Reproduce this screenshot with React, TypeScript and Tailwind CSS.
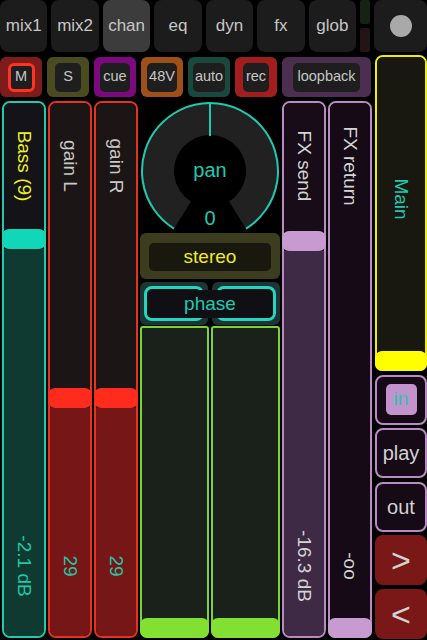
import React from "react";

type FaderProps = {
  borderCls: string;
  topCls: string;
  thumbCls: string;
  fillCls?: string;
  topHCls?: string;
  bottomThumb?: boolean;
  label: string;
  labelCls: string;
  value?: string;
  valueCls?: string;
  labelTopCls: string;
  widthCls: string;
};

function Fader(p: FaderProps) {
  return (
    <div className={`relative h-full ${p.widthCls} border-2 ${p.borderCls} rounded-[8px] flex flex-col`}>
      {p.bottomThumb ? (
        <>
          <div className={`flex-1 ${p.topCls} rounded-t-[6px]`} />
          <div className={`h-[20px] ${p.thumbCls} rounded-[7px] -mx-[2px] -mb-[2px]`} />
        </>
      ) : (
        <>
          <div className={`${p.topHCls} ${p.topCls} rounded-t-[6px]`} />
          <div className={`h-[20px] ${p.thumbCls} rounded-[7px] -mx-[2px]`} />
          <div className={`flex-1 ${p.fillCls} rounded-b-[6px]`} />
        </>
      )}
      <span
        className={`absolute left-1/2 ${p.labelTopCls} -translate-x-1/2 -translate-y-1/2 [writing-mode:vertical-rl] whitespace-nowrap text-[19px] leading-none ${p.labelCls}`}
      >
        {p.label}
      </span>
      {p.value !== undefined && (
        <span
          className={`absolute left-1/2 top-[463px] -translate-x-1/2 -translate-y-1/2 [writing-mode:vertical-rl] whitespace-nowrap text-[19px] leading-none ${p.valueCls}`}
        >
          {p.value}
        </span>
      )}
    </div>
  );
}

function Knob() {
  return (
    <div className="relative h-[132px]">
      <svg width="140" height="132" viewBox="0 0 140 132" className="block">
        <path
          d="M 33.97 127.67 A 68 68 0 1 1 106.03 127.67 L 89.08 100.53 A 36 36 0 1 0 50.92 100.53 Z"
          fill="#212121"
        />
        <path
          d="M 33.97 127.67 A 68 68 0 1 1 106.03 127.67"
          fill="none"
          stroke="#1fc9b1"
          strokeWidth="2"
        />
        <line x1="70" y1="2" x2="70" y2="35" stroke="#1fc9b1" strokeWidth="2" />
      </svg>
      <span className="absolute left-1/2 top-[69px] -translate-x-1/2 -translate-y-1/2 text-[20px] leading-none text-[#1fc9b1]">
        pan
      </span>
      <span className="absolute left-1/2 top-[117px] -translate-x-1/2 -translate-y-1/2 text-[20px] leading-none text-[#1fc9b1]">
        0
      </span>
    </div>
  );
}

const tabs = ["mix1", "mix2", "chan", "eq", "dyn", "fx", "glob"];

export default function App() {
  return (
    <div className="w-[427px] h-[640px] bg-black flex flex-col overflow-hidden font-['Liberation_Sans',Arial,sans-serif] text-[#c6c6c6]">
      {/* tab row */}
      <div className="h-[52px] flex">
        <div className="w-[356px] grid grid-cols-7 gap-[4px]">
          {tabs.map((t) => (
            <div
              key={t}
              className={`rounded-[8px] flex items-center justify-center text-[17px] ${
                t === "chan" ? "bg-[#3c3c3c]" : "bg-[#1c1c1c]"
              }`}
            >
              {t}
            </div>
          ))}
        </div>
        <div className="ml-[4px] w-[10px] flex flex-col gap-[4px]">
          <div className="flex-1 bg-[#152315] rounded-[2px]" />
          <div className="flex-1 bg-[#231515] rounded-[2px]" />
        </div>
        <div className="ml-[4px] flex-1 bg-[#1c1c1c] rounded-[8px] flex items-center justify-center">
          <div className="w-[22px] h-[22px] rounded-full bg-[#a9a9a9]" />
        </div>
      </div>

      <div className="flex-1 flex mt-[3px]">
        {/* left area */}
        <div className="w-[372px] flex flex-col pt-[2px]">
          <div className="h-[40px] grid grid-cols-8 gap-[5px] pr-[1px] text-[14.5px]">
            <div className="rounded-[6px] bg-[#7e1c1c] flex items-center justify-center">
              <div className="h-[29px] min-w-[27px] px-[3px] rounded-[6px] border-[3px] border-[#ff3322] bg-[#1e1e1e] flex items-center justify-center">
                M
              </div>
            </div>
            <div className="rounded-[6px] bg-[#4b4b21] flex items-center justify-center">
              <div className="h-[29px] min-w-[26px] px-[3px] rounded-[5px] bg-[#1e1e1e] flex items-center justify-center">
                S
              </div>
            </div>
            <div className="rounded-[6px] bg-[#7c0a7e] flex items-center justify-center">
              <div className="h-[29px] min-w-[26px] px-[3px] rounded-[5px] bg-[#1e1e1e] flex items-center justify-center">
                cue
              </div>
            </div>
            <div className="rounded-[6px] bg-[#9e5018] flex items-center justify-center">
              <div className="h-[29px] min-w-[26px] px-[2px] rounded-[5px] bg-[#1e1e1e] flex items-center justify-center">
                48V
              </div>
            </div>
            <div className="rounded-[6px] bg-[#19483f] flex items-center justify-center">
              <div className="h-[29px] min-w-[26px] px-[2px] rounded-[5px] bg-[#1e1e1e] flex items-center justify-center">
                auto
              </div>
            </div>
            <div className="rounded-[6px] bg-[#a21e1e] flex items-center justify-center">
              <div className="h-[29px] min-w-[26px] px-[3px] rounded-[5px] bg-[#1e1e1e] flex items-center justify-center">
                rec
              </div>
            </div>
            <div className="col-span-2 rounded-[6px] bg-[#4c2e50] flex items-center justify-center">
              <div className="h-[29px] min-w-[26px] px-[4px] rounded-[5px] bg-[#1e1e1e] flex items-center justify-center">
                loopback
              </div>
            </div>
          </div>

          <div className="mt-[4px] h-[537px] flex gap-[2px] pl-[2px]">
            <Fader
              widthCls="w-[44px]"
              borderCls="border-[#1fcbb0]"
              topCls="bg-[#141418]"
              topHCls="h-[126px]"
              thumbCls="bg-[#12d6b8]"
              fillCls="bg-[#0f3a32]"
              label="Bass (9)"
              labelCls="text-[#f0f020]"
              labelTopCls="top-[63px]"
              value="-2.1 dB"
              valueCls="text-[#1fc9a8]"
            />
            <Fader
              widthCls="w-[44px]"
              borderCls="border-[#e6321f]"
              topCls="bg-[#1c1515]"
              topHCls="h-[285px]"
              thumbCls="bg-[#ff2b1c]"
              fillCls="bg-[#761616]"
              label="gain L"
              labelCls="text-[#c8c8c8]"
              labelTopCls="top-[63px]"
              value="29"
              valueCls="text-[#1fc9a8]"
            />
            <Fader
              widthCls="w-[44px]"
              borderCls="border-[#e6321f]"
              topCls="bg-[#1c1515]"
              topHCls="h-[285px]"
              thumbCls="bg-[#ff2b1c]"
              fillCls="bg-[#761616]"
              label="gain R"
              labelCls="text-[#c8c8c8]"
              labelTopCls="top-[63px]"
              value="29"
              valueCls="text-[#1fc9a8]"
            />

            {/* center column */}
            <div className="w-[140px] flex flex-col">
              <Knob />
              <div className="h-[46px] rounded-[6px] bg-[#3c3c1e] px-[9px] pt-[10px] pb-[8px]">
                <div className="h-full rounded-[5px] bg-[#18180e] flex items-center justify-center text-[19px] text-[#ecec22]">
                  stereo
                </div>
              </div>
              <div className="relative mt-[3px] h-[43px] grid grid-cols-2 gap-[4px]">
                <div className="rounded-[6px] bg-[#1a3533] p-[4px]">
                  <div className="h-full rounded-[8px] border-[3px] border-[#22d6c0] bg-[#101014]" />
                </div>
                <div className="rounded-[6px] bg-[#1a3533] p-[4px]">
                  <div className="h-full rounded-[8px] border-[3px] border-[#22d6c0] bg-[#101014]" />
                </div>
                <div className="absolute left-[7px] right-[7px] top-[8px] bottom-[7px] rounded-[5px] bg-[#101014] flex items-center justify-center text-[19px] text-[#1fc9b1]">
                  phase
                </div>
              </div>
              <div className="mt-[1px] flex-1 grid grid-cols-2 gap-[2px]">
                {[0, 1].map((i) => (
                  <div
                    key={i}
                    className="border-2 border-[#78d630] bg-[#1a201a] rounded-t-[3px] rounded-b-[8px] flex flex-col justify-end"
                  >
                    <div className="h-[20px] bg-[#82e032] rounded-[7px] -mx-[2px] -mb-[2px]" />
                  </div>
                ))}
              </div>
            </div>

            <Fader
              widthCls="w-[44px]"
              borderCls="border-[#b98bc2]"
              topCls="bg-[#190c19]"
              topHCls="h-[128px]"
              thumbCls="bg-[#c79ad0]"
              fillCls="bg-[#3f2a46]"
              label="FX send"
              labelCls="text-[#d4d4d4]"
              labelTopCls="top-[63px]"
              value="-16.3 dB"
              valueCls="text-[#d4d4d4]"
            />
            <Fader
              widthCls="w-[44px]"
              borderCls="border-[#b98bc2]"
              topCls="bg-[#150a15]"
              thumbCls="bg-[#c79ad0]"
              bottomThumb
              label="FX return"
              labelCls="text-[#d4d4d4]"
              labelTopCls="top-[63px]"
              value="-oo"
              valueCls="text-[#d4d4d4]"
            />
          </div>
        </div>

        {/* right column */}
        <div className="ml-[3px] w-[52px] flex flex-col gap-[3.5px]">
          <div className="h-[316px] shrink-0">
            <Fader
              widthCls="w-full"
              borderCls="border-[#eeee00]"
              topCls="bg-[#181810]"
              thumbCls="bg-[#ffff00]"
              bottomThumb
              label="Main"
              labelCls="text-[#1fc9b1]"
              labelTopCls="top-[142px]"
            />
          </div>
          <div className="h-[50px] shrink-0 rounded-[8px] border-2 border-[#b98bc2] bg-[#150a15] flex items-center justify-center">
            <div className="w-[31px] h-[31px] rounded-[5px] bg-[#c192cb] flex items-center justify-center text-[19px] text-[#1fc9b1]">
              in
            </div>
          </div>
          <div className="h-[50px] shrink-0 rounded-[8px] border-2 border-[#b98bc2] bg-[#150a15] flex items-center justify-center text-[20px] text-[#d2d2d2]">
            play
          </div>
          <div className="h-[50px] shrink-0 rounded-[8px] border-2 border-[#b98bc2] bg-[#150a15] flex items-center justify-center text-[20px] text-[#d2d2d2]">
            out
          </div>
          <div className="h-[50px] shrink-0 rounded-[8px] bg-[#7a1818] flex items-center justify-center text-[34px] leading-none text-[#d2d2d2]">
            &gt;
          </div>
          <div className="h-[50px] shrink-0 rounded-[8px] bg-[#7a1818] flex items-center justify-center text-[34px] leading-none text-[#d2d2d2]">
            &lt;
          </div>
        </div>
      </div>
    </div>
  );
}
